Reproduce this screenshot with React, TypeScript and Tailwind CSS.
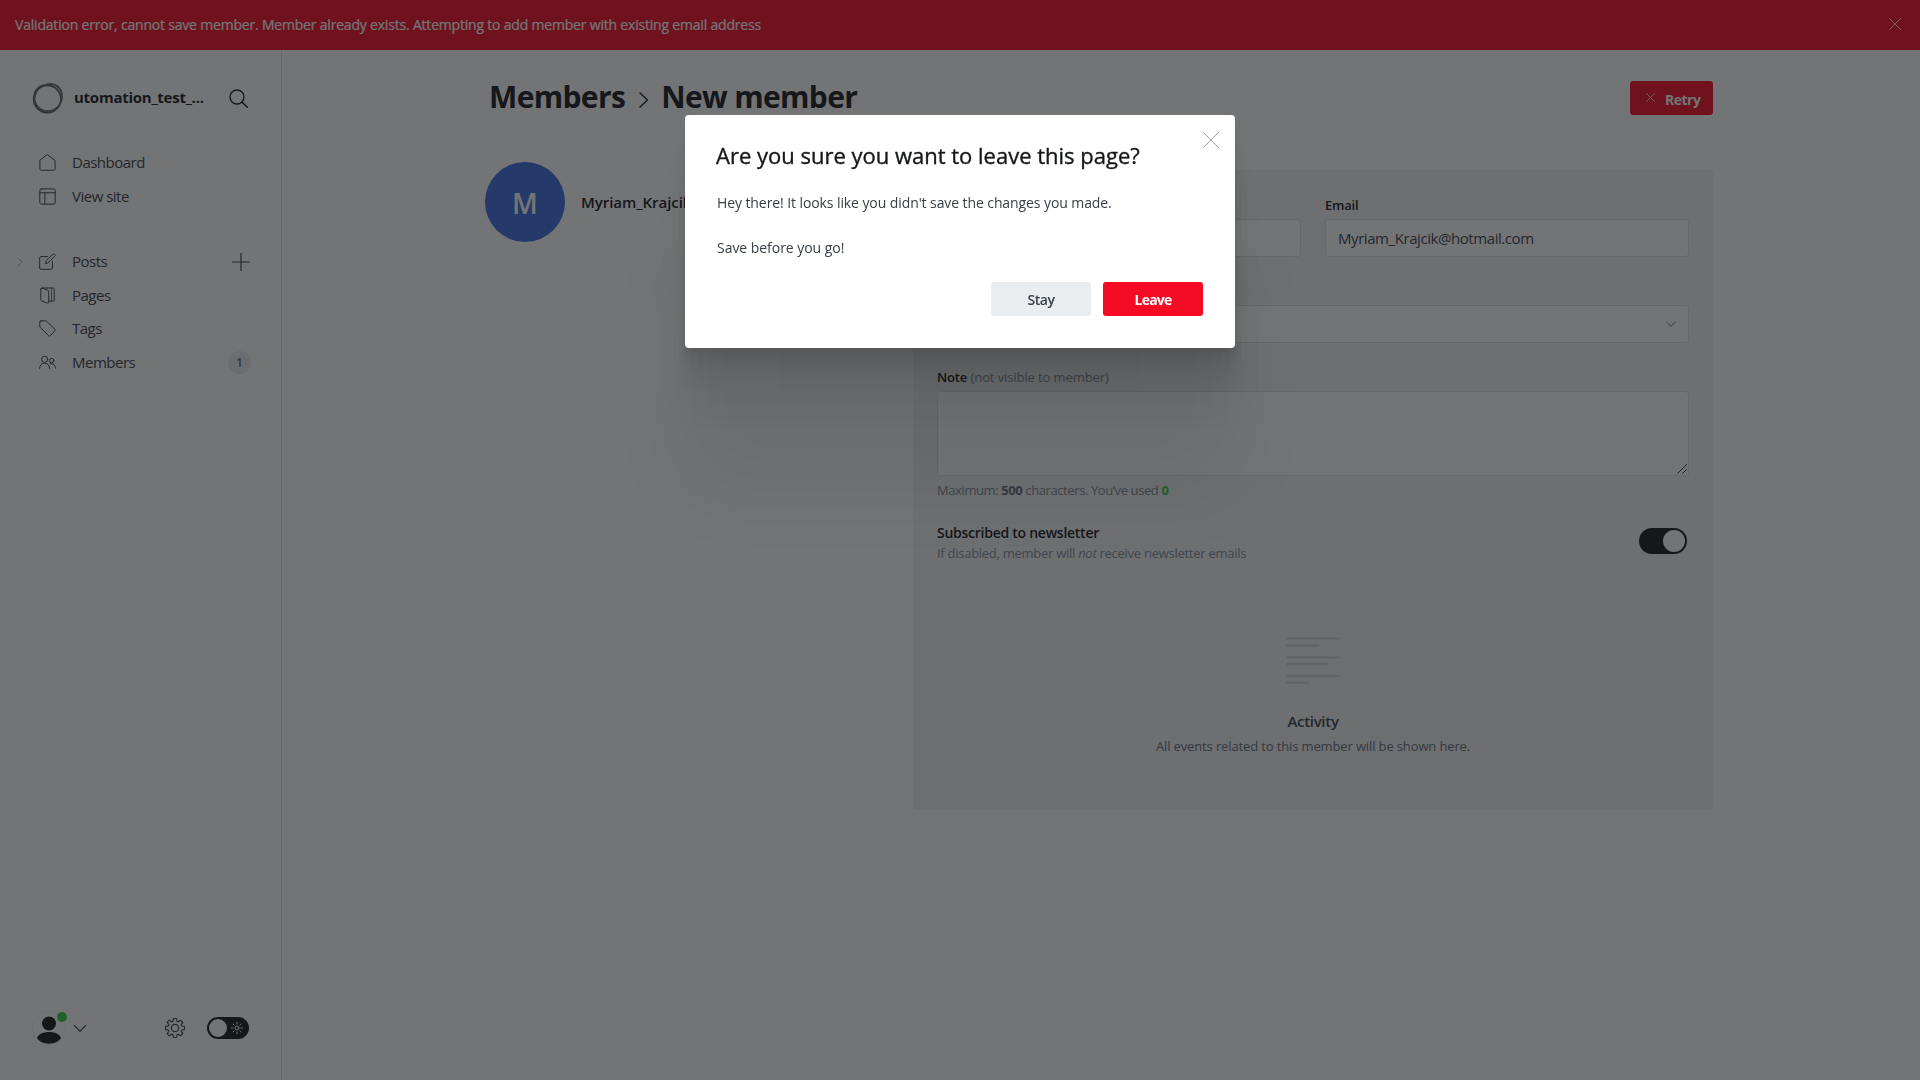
import React from 'react';

type P = { children?: React.ReactNode; className?: string };

const Line = ({ children, className = '', box = '0 0 24 24' }: P & { box?: string }) => (
  <svg viewBox={box} fill="none" stroke="currentColor" strokeLinecap="round" strokeLinejoin="round" className={`shrink-0 ${className}`}>
    {children}
  </svg>
);

const Cross = ({ className }: P) => (
  <Line className={className} box="0 0 16 16">
    <path d="M.5.5l15 15M15.5.5l-15 15" vectorEffect="non-scaling-stroke" />
  </Line>
);

const HomeIcon = () => (
  <Line className="size-[17px]" box="0 0 17 17">
    <path d="M.9 6.6v8.2c0 .9.6 1.5 1.5 1.5h12.2c.9 0 1.5-.6 1.5-1.5V6.6L8.5.7z" />
  </Line>
);

const LayoutIcon = () => (
  <Line className="size-[17px]" box="0 0 17 17">
    <rect x=".8" y=".9" width="15.4" height="15.2" rx="1.5" />
    <path d="M.8 4.8h15.4M5.9 4.8v11.3" />
  </Line>
);

const EditIcon = () => (
  <Line className="size-[17px]" box="0 0 17 17">
    <path d="M8.5 3.6H1.9c-.7 0-1.2.5-1.2 1.2v10.3c0 .7.5 1.2 1.2 1.2h10.4c.7 0 1.2-.5 1.2-1.2V8.5" />
    <path d="M6.600 10.300l.6-2.600 6.500-6.500c.5-.5 1.200-.5 1.700 0l.3.3c.5.5.5 1.200 0 1.700L9.200 9.700z" />
  </Line>
);

const PagesIcon = () => (
  <Line className="size-[17px]" box="0 0 17 17">
    <path d="M1.800 2v10.800c0 .6.300.9.800 1.100l6.100 2.300c.6.200 1-.1 1-.7V4.300c0-.5-.2-.8-.7-1L3 1.100C2.300.9 1.800 1.300 1.800 2z" />
    <path d="M3 1h10.900c.8 0 1.300.5 1.300 1.200v10.600c0 .8-.5 1.300-1.300 1.300H9.900" />
    <path d="M12.600 1.300v12.600" strokeWidth=".7" />
  </Line>
);

const TagIcon = () => (
  <Line className="size-[17px]" box="0 0 17 17">
    <path d="M1.900.9h4.700c.5 0 .8.1 1.100.4l8.200 8c.5.5.5 1 0 1.500l-4.600 5c-.5.5-1.100.5-1.600 0L1.300 7.500C1 7.200.8 6.900.8 6.400V2C.8 1.300 1.200.9 1.900.9z" />
  </Line>
);

const MembersIcon = () => (
  <Line className="size-[17px]" box="0 0 17 17">
    <circle cx="5.600" cy="5.300" r="3.100" />
    <path d="M.6 14.500c0-3.100 2-5.300 5-5.300s5 2.200 5 5.300" />
    <circle cx="12.700" cy="6.600" r="2.200" />
    <path d="M11.300 9.900c3-.8 5.100 1.200 5.100 4.200" />
  </Line>
);

const gearPath = (() => {
  const pts: string[] = [];
  for (let i = 0; i < 8; i++) {
    const c = (i * Math.PI) / 4;
    const at = (r: number, a: number) => `${(10 + r * Math.cos(c + a)).toFixed(2)} ${(10 + r * Math.sin(c + a)).toFixed(2)}`;
    pts.push(`${i ? 'L' : 'M'}${at(7.3, -0.27)}L${at(9.4, -0.17)}Q${at(9.8, 0)} ${at(9.4, 0.17)}L${at(7.3, 0.27)}Q${at(6.5, 0.39)} ${at(7.3, 0.515)}`);
  }
  return pts.join('') + 'Z';
})();

const NavItem = ({ icon, label, right, left }: { icon: React.ReactNode; label: string; right?: React.ReactNode; left?: React.ReactNode }) => (
  <div className="flex h-[33.5px] items-center pr-[30px] text-[#394047]">
    <div className="flex w-[38.5px] justify-center text-[#a5afb9]">{left}</div>
    {icon}
    <span className="ml-[16.5px] mt-[-1px] flex-1 text-[15px] tracking-[-0.5px]">{label}</span>
    {right}
  </div>
);

const Sidebar = () => (
  <aside className="flex w-[282px] shrink-0 flex-col border-r border-[#dfe3e7]">
    <div className="mt-[30px] flex h-9 items-center pl-[32px] pr-[33px] text-[#15171a]">
      <svg viewBox="0 0 32 32" className="size-8 shrink-0" fill="none" stroke="#4a5057">
        <circle cx="15.3" cy="17" r="13.6" strokeWidth="1.7" />
        <ellipse cx="16.6" cy="16" rx="14" ry="13" strokeWidth="1.3" stroke="#5b6168" transform="rotate(-35 16 16)" />
        <ellipse cx="15.8" cy="16.500" rx="14.3" ry="12.8" strokeWidth="1.1" stroke="#6b7178" transform="rotate(50 16 16)" />
        <path d="M14 2.200c6-1.800 11 .5 13.300 3.300 2.300 2.800 2.900 6 2.700 9" strokeWidth="1.200" stroke="#6b7178" />
      </svg>
      <span className="ml-[10px] mt-[-2px] flex-1 text-[15px] font-bold tracking-[-0.25px]">utomation_test_...</span>
      <Line className="size-[19px]" box="0 0 19 19">
        <circle cx="8" cy="8" r="7" strokeWidth="1.3" />
        <path d="M13 13l5.300 5.300" strokeWidth="1.5" />
      </Line>
    </div>
    <nav className="mt-[30px] flex flex-col">
      <NavItem icon={<HomeIcon />} label="Dashboard" />
      <NavItem icon={<LayoutIcon />} label="View site" />
      <div className="h-8" />
      <NavItem
        icon={<EditIcon />}
        label="Posts"
        left={<Line className="mr-[-2px] h-[10px] w-[6px]" box="0 0 7 11"><path d="M1 1l5 4.500-5 4.500" /></Line>}
        right={<Line className="mr-[1px] size-[18px]" box="0 0 18 18"><path d="M9 .5v17M.5 9h17" strokeWidth="1.2" /></Line>}
      />
      <NavItem icon={<PagesIcon />} label="Pages" />
      <NavItem icon={<TagIcon />} label="Tags" />
      <NavItem
        icon={<MembersIcon />}
        label="Members"
        right={<span className="flex size-[23px] items-center justify-center rounded-full bg-[#ebeef0] pt-px text-[12px] font-semibold text-[#626d79]">1</span>}
      />
    </nav>
    <div className="mb-[35px] mt-auto flex h-[34px] items-center pl-[32px] pr-[32px] text-[#394047]">
      <div className="relative size-[34px]">
        <svg viewBox="0 0 34 34" className="size-[34px]">
          <circle cx="17" cy="17" r="16.5" fill="none" stroke="#f1f3f4" />
          <circle cx="17" cy="12.500" r="7" fill="#15171a" />
          <path d="M5 27c1.500-4 6-6 12-6s10.500 2 12 6c-2.500 4-7 5.700-12 5.700S7.500 31 5 27z" fill="#15171a" />
        </svg>
        <span className="absolute left-[25px] top-[1px] size-[10px] rounded-full bg-[#30cf43]" />
      </div>
      <Line className="ml-2 h-[7px] w-3" box="0 0 12 7"><path d="M.6.600L6 6.300 11.400.6" strokeWidth="1.2" /></Line>
      <Line className="ml-auto size-[20px]" box="0 0 20 20">
        <path d={gearPath} strokeWidth="1.2" />
        <circle cx="10" cy="10" r="3.7" strokeWidth="1.2" />
      </Line>
      <div className="ml-[22px] flex h-[22px] w-[42px] items-center justify-between rounded-full bg-[#15171a] pl-[2px] pr-[6px]">
        <span className="size-[18px] rounded-full bg-white" />
        <Line className="size-3 text-white" box="0 0 12 12">
          <circle cx="6" cy="6" r="1.9" />
          <path d="M6 .4v1.700M6 9.900v1.700M.4 6h1.700M9.900 6h1.700M2 2l1.200 1.200M8.800 8.800L10 10M10 2L8.800 3.200M3.200 8.800L2 10" />
        </Line>
      </div>
    </div>
  </aside>
);

const Field = ({ children, className = '' }: P) => (
  <div className={`flex items-center rounded-[3px] border border-[#dde1e5] bg-white px-3 ${className}`}>{children}</div>
);

const Panel = () => (
  <section className="flex h-[640px] w-[800px] flex-col rounded-[3px] bg-[#f1f2f3] px-6 text-[13px] text-[#7c8b9a]">
    <div className="mt-[25px] grid grid-cols-2 gap-6">
      {[['Name', 'Myriam_Krajcik'], ['Email', 'Myriam_Krajcik@hotmail.com']].map(([label, value]) => (
        <div key={label}>
          <div className="mb-1 h-5 text-[13px] font-semibold leading-5 tracking-[-0.2px] text-[#15171a]">{label}</div>
          <Field className="h-[38px] text-[15px] tracking-[-0.43px] text-[#394047]">{value}</Field>
        </div>
      ))}
    </div>
    <div className="mb-1 mt-6 h-5 font-semibold leading-5 text-[#15171a]">Labels</div>
    <Field className="h-[38px] justify-end">
      <Line className="mt-px h-[7px] w-[10px] text-[#abb4be]" box="0 0 11 7"><path d="M1 1l4.500 4.500L10 1" strokeWidth="1.6" /></Line>
    </Field>
    <div className="mb-1 mt-6 h-5 leading-5">
      <span className="font-semibold tracking-[-0.15px] text-[#15171a]">Note</span> <span className="tracking-[-0.1px]">(not visible to member)</span>
    </div>
    <div className="flex h-[85px] items-end justify-end rounded-[3px] border border-[#dde1e5] bg-white p-px">
      <Line className="size-[10px] text-[#15171a]" box="0 0 10 10"><path d="M.5 9.500l9-9M5.500 9.500l4-4" strokeWidth=".9" /></Line>
    </div>
    <div className="mt-1 h-5 leading-5 tracking-[-0.4px]">
      Maximum: <b className="text-[#626d79]">500</b> characters. You’ve used <b className="text-[#30cf43]">0</b>
    </div>
    <div className="mt-[23px] flex items-center justify-between pr-[2px]">
      <div>
        <div className="h-5 text-[14px] font-semibold leading-5 tracking-[-0.26px] text-[#15171a]">Subscribed to newsletter</div>
        <div className="h-5 leading-5 tracking-[-0.27px]">If disabled, member will <em>not</em> receive newsletter emails</div>
      </div>
      <div className="mt-[-4px] flex h-[26px] w-12 items-center justify-end rounded-full bg-[#15171a] pr-[2px]">
        <span className="size-[22px] rounded-full bg-white" />
      </div>
    </div>
    <div className="mt-[73px] flex flex-col items-center">
      <Line className="h-[48px] w-[54px] text-[#d3d8dd]" box="0 0 54 48">
        <path d="M1.300 2.500h51.400M1.300 9.500h30.500M1.300 21.500h51.400M1.300 28h40M1.300 40h51.400M1.300 46.700h21" strokeWidth="2.6" />
      </Line>
      <div className="mt-[25px] h-6 text-[15px] font-semibold leading-6 tracking-[-0.3px] text-[#394047]">Activity</div>
      <div className="mt-[3px] h-5 leading-5 tracking-[-0.13px] text-[#626d79]">All events related to this member will be shown here.</div>
    </div>
  </section>
);

const Modal = () => (
  <div className="relative h-[233px] w-[550px] rounded-[4px] bg-white px-8 pt-[25px] shadow-[0_3.8px_2.2px_rgba(0,0,0,0.028),0_9.2px_5.3px_rgba(0,0,0,0.035),0_17.3px_10px_rgba(0,0,0,0.04),0_30.8px_17.9px_rgba(0,0,0,0.048),0_57.7px_33.4px_rgba(0,0,0,0.056),0_138px_80px_rgba(0,0,0,0.07)]">
    <Cross className="absolute right-4 top-[17px] size-4 text-[#9aa0a6]" />
    <h1 className="ml-[-1px] h-[30px] text-[22px] leading-[30px] text-[#15171a] [-webkit-text-stroke:0.35px]">Are you sure you want to leave this page?</h1>
    <p className="mt-[21px] h-6 text-[14px] leading-6 tracking-[-0.09px] text-[#394047]">Hey there! It looks like you didn't save the changes you made.</p>
    <p className="mt-[21px] h-6 text-[14px] leading-6 tracking-[-0.04px] text-[#394047]">Save before you go!</p>
    <div className="mt-[22px] flex justify-end gap-3">
      <button className="h-[34px] w-[100px] rounded-[3px] bg-[#e9edf0] pt-px text-[14px] font-semibold tracking-[-0.5px] text-[#394047]">Stay</button>
      <button className="h-[34px] w-[100px] rounded-[3px] bg-[#f50b23] pt-px text-[14px] font-bold tracking-[-0.8px] text-white">Leave</button>
    </div>
  </div>
);

export default function App() {
  return (
    <div className="flex h-[1080px] w-[1920px] flex-col overflow-hidden bg-white font-['Open_Sans','Noto_Sans',sans-serif]">
      <header className="flex h-[50px] shrink-0 items-center justify-between bg-[#f50b23] pb-[2px] pl-[15px] pr-[19px] text-white">
        <span className="text-[14px] tracking-[-0.195px] [-webkit-text-stroke:0.2px]">Validation error, cannot save member. Member already exists. Attempting to add member with existing email address</span>
        <Cross className="size-3 opacity-80" />
      </header>
      <div className="flex min-h-0 flex-1">
        <Sidebar />
        <main className="flex-1 pl-[203px] pr-[207px]">
          <div className="flex h-[96px] items-center justify-between pl-[4px] text-[#15171a]">
            <h2 className="mt-[-3px] flex items-center text-[30px] font-bold tracking-[-0.65px]">
              <span>Members</span>
              <Line className="ml-[14px] mr-[12px] mt-[7px] h-[16px] w-[10px]" box="0 0 10 16"><path d="M1 1l7.500 7L1 15" strokeWidth="1.4" /></Line>
              <span>New member</span>
            </h2>
            <button className="flex h-[34px] w-[83px] items-center rounded-[3px] bg-[#f50b23] pl-4 text-white">
              <Cross className="mt-[-1px] size-[9px] opacity-70" />
              <span className="ml-[10px] mt-[2px] text-[14px] font-bold tracking-[-0.5px]">Retry</span>
            </button>
          </div>
          <div className="mt-4 flex justify-between">
            <div className="flex h-20 items-center">
              <div className="flex size-20 items-center justify-center rounded-full bg-[#3e6fe0] pt-px text-[28px] font-semibold text-white">M</div>
              <span className="ml-[16px] text-[15px] font-semibold tracking-[-0.05px] text-[#15171a]">Myriam_Krajcik</span>
            </div>
            <div className="pt-2"><Panel /></div>
          </div>
        </main>
      </div>
      <div className="fixed inset-0 flex items-start justify-center bg-[rgba(21,23,26,0.6)] pt-[115px]">
        <Modal />
      </div>
    </div>
  );
}
